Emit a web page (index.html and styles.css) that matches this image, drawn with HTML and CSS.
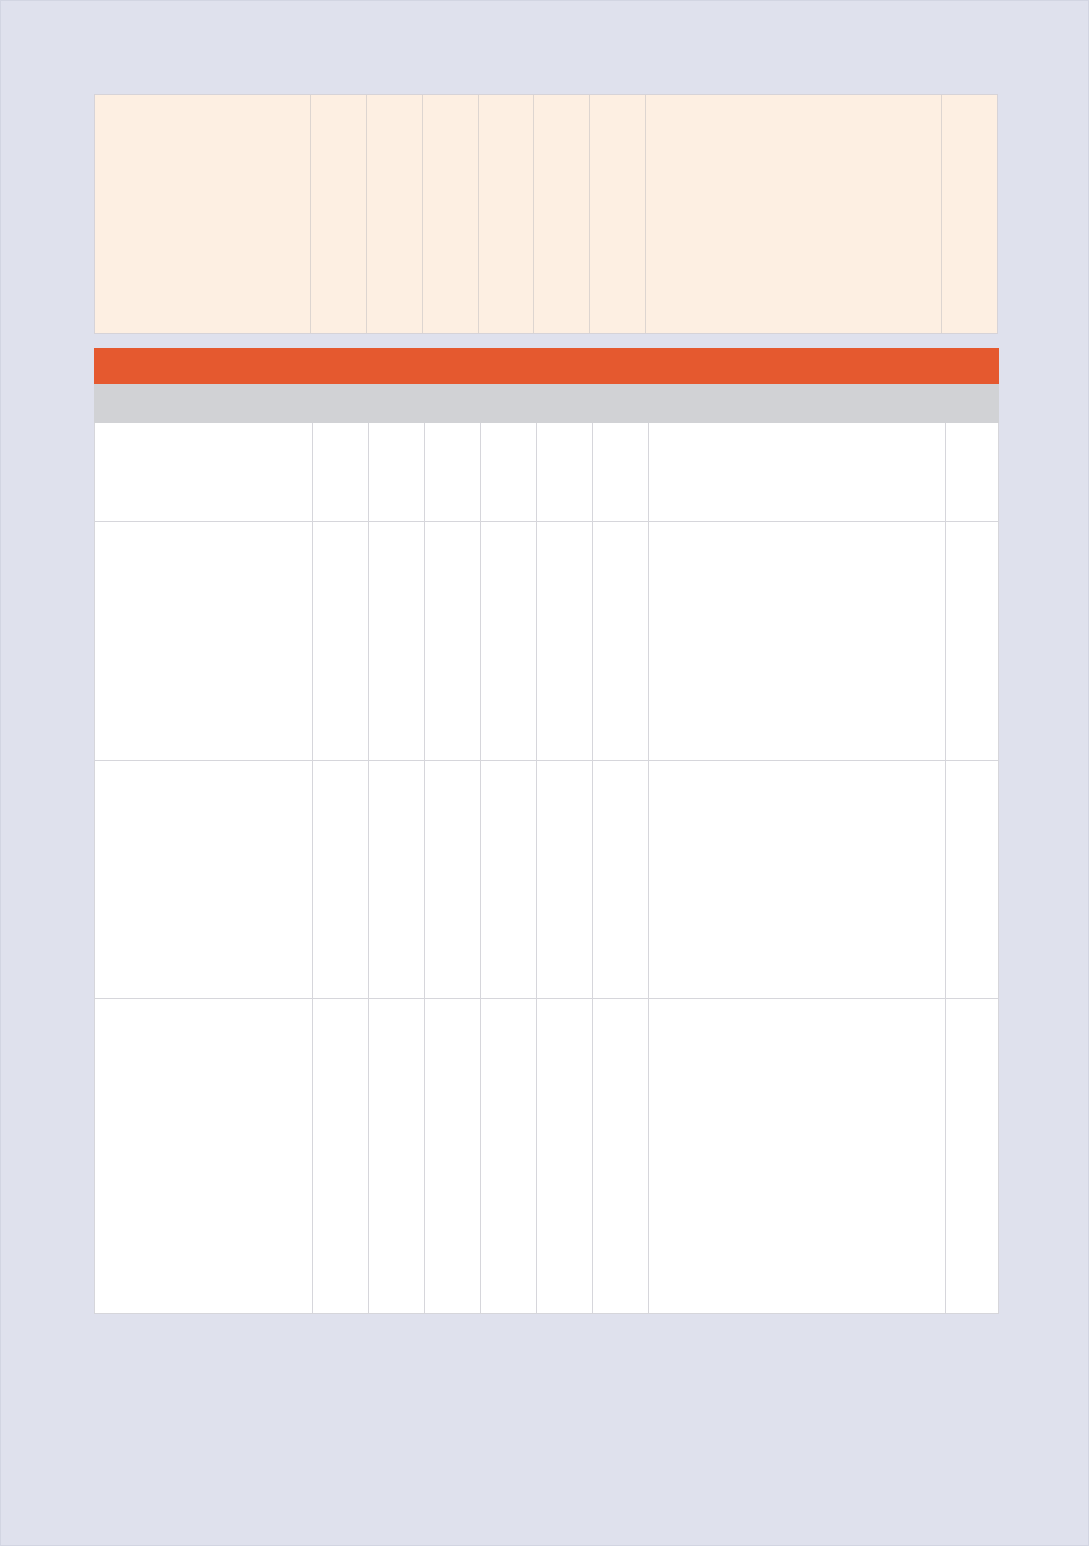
FILE: index.html
```html
<!DOCTYPE html>
<html lang="en">
<head>
<meta charset="utf-8">
<title>Table</title>
<link rel="stylesheet" href="styles.css">
</head>
<body>
<div class="page">
  <div class="head">
    <div class="hc"></div><div class="hc"></div><div class="hc"></div><div class="hc"></div><div class="hc"></div><div class="hc"></div><div class="hc"></div><div class="hc"></div><div class="hc"></div>
  </div>
  <div class="bar-orange"></div>
  <div class="bar-gray"></div>
  <div class="grid">
    <div class="row r1">
      <div class="c"></div><div class="c"></div><div class="c"></div><div class="c"></div><div class="c"></div><div class="c"></div><div class="c"></div><div class="c"></div><div class="c"></div>
    </div>
    <div class="row r2">
      <div class="c"></div><div class="c"></div><div class="c"></div><div class="c"></div><div class="c"></div><div class="c"></div><div class="c"></div><div class="c"></div><div class="c"></div>
    </div>
    <div class="row r3">
      <div class="c"></div><div class="c"></div><div class="c"></div><div class="c"></div><div class="c"></div><div class="c"></div><div class="c"></div><div class="c"></div><div class="c"></div>
    </div>
    <div class="row r4">
      <div class="c"></div><div class="c"></div><div class="c"></div><div class="c"></div><div class="c"></div><div class="c"></div><div class="c"></div><div class="c"></div><div class="c"></div>
    </div>
  </div>
</div>
</body>
</html>
```

FILE: styles.css
```css
html, body {
  margin: 0;
  padding: 0;
}
body {
  font-family: "Liberation Sans", Arial, sans-serif;
  background: #dfe1ed;
}
.page {
  box-sizing: border-box;
  width: 1089px;
  height: 1546px;
  border: 1px solid #d2d5e2;
  background: #dfe1ed;
  padding: 93px 0 0 93px;
}
.head {
  box-sizing: border-box;
  width: 904px;
  height: 240px;
  border: 1px solid #d6d3d8;
  background: #fdefe2;
  display: grid;
  grid-template-columns: 216px 56px 56px 56px 55px 56px 56px 296px 55px;
}
.hc {
  box-sizing: border-box;
  border-right: 1px solid #ddd5d0;
}
.hc:last-child {
  border-right: none;
}
.bar-orange {
  margin-top: 14px;
  width: 905px;
  height: 36px;
  background: #e5592f;
}
.bar-gray {
  width: 905px;
  height: 39px;
  background: #d1d2d5;
}
.grid {
  box-sizing: border-box;
  width: 905px;
  border: 1px solid #d6d6db;
  border-top: none;
  background: #ffffff;
}
.row {
  box-sizing: border-box;
  display: grid;
  grid-template-columns: 218px 56px 56px 56px 56px 56px 56px 297px 52px;
  border-bottom: 1px solid #d6d6db;
}
.row:last-child {
  border-bottom: none;
}
.r1 { height: 99px; }
.r2 { height: 239px; }
.r3 { height: 238px; }
.r4 { height: 314px; }
.c {
  box-sizing: border-box;
  border-right: 1px solid #d6d6db;
}
.c:last-child {
  border-right: none;
}
```
